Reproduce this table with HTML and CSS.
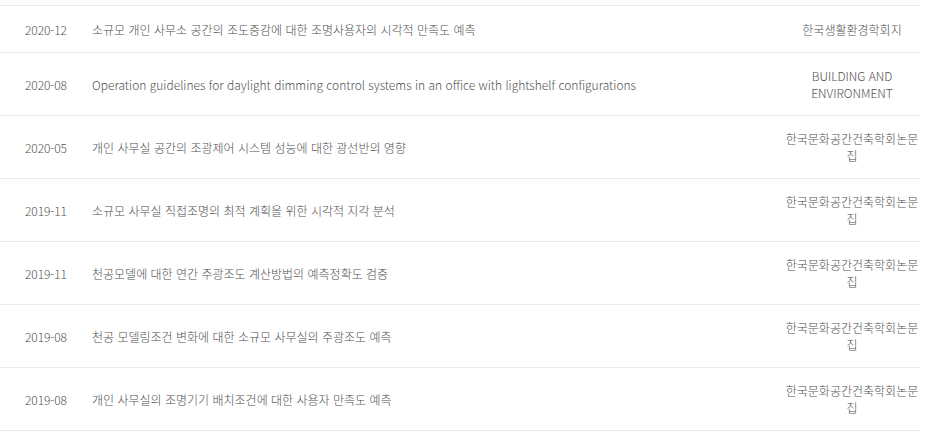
FILE: index.html
```html
<!DOCTYPE html>
<html lang="ko">
<head>
<meta charset="utf-8">
<link rel="stylesheet" href="styles.css">
</head>
<body>
<table class="papers">
  <colgroup><col class="c-date"><col class="c-title"><col class="c-journal"></colgroup>
  <tbody>
    <tr><td class="date">2020-12</td><td class="title">소규모 개인 사무소 공간의 조도증감에 대한 조명사용자의 시각적 만족도 예측</td><td class="journal">한국생활환경학회지</td></tr>
    <tr><td class="date">2020-08</td><td class="title">Operation guidelines for daylight dimming control systems in an office with lightshelf configurations</td><td class="journal">BUILDING AND ENVIRONMENT</td></tr>
    <tr><td class="date">2020-05</td><td class="title">개인 사무실 공간의 조광제어 시스템 성능에 대한 광선반의 영향</td><td class="journal">한국문화공간건축학회논문집</td></tr>
    <tr><td class="date">2019-11</td><td class="title">소규모 사무실 직접조명의 최적 계획을 위한 시각적 지각 분석</td><td class="journal">한국문화공간건축학회논문집</td></tr>
    <tr><td class="date">2019-11</td><td class="title">천공모델에 대한 연간 주광조도 계산방법의 예측정확도 검증</td><td class="journal">한국문화공간건축학회논문집</td></tr>
    <tr><td class="date">2019-08</td><td class="title">천공 모델링조건 변화에 대한 소규모 사무실의 주광조도 예측</td><td class="journal">한국문화공간건축학회논문집</td></tr>
    <tr><td class="date">2019-08</td><td class="title">개인 사무실의 조명기기 배치조건에 대한 사용자 만족도 예측</td><td class="journal">한국문화공간건축학회논문집</td></tr>
  </tbody>
</table>
</body>
</html>
```
FILE: styles.css
```css
html, body {
  margin: 0;
  padding: 0;
  background: #fff;
}
body {
  padding-top: 5px;
  font-family: "Noto Sans CJK KR", "Noto Sans", sans-serif;
  font-size: 12px;
  font-weight: 300;
  color: #505050;
}
.papers {
  width: 920px;
  table-layout: fixed;
  border-collapse: collapse;
  border-top: 1px solid #ebebeb;
}
.c-date { width: 92px; }
.c-journal { width: 136px; }
.papers td {
  border-bottom: 1px solid #ebebeb;
  padding: 14px 0;
  height: 18px;
  line-height: 17px;
  vertical-align: middle;
}
.papers .date {
  padding-left: 25px;
  white-space: nowrap;
  letter-spacing: -0.1px;
}
.title {
  text-align: left;
}
.journal {
  text-align: center;
}
```
